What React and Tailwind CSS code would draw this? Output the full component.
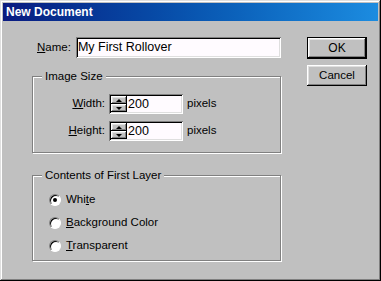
import React from "react";

const font = { fontFamily: '"Liberation Sans", Arial, sans-serif' };

function Raised({ children, className = "" }) {
  return (
    <div
      className={`flex items-center justify-center bg-[#c0c0c0] shadow-[inset_-1px_-1px_0_#000,inset_1px_1px_0_#fff,inset_-2px_-2px_0_#808080,inset_2px_2px_0_#dfdfdf] ${className}`}
    >
      {children}
    </div>
  );
}

function Spinner() {
  return (
    <div className="flex flex-col w-[16px] h-full">
      <Raised className="flex-1">
        <div className="w-0 h-0 border-l-[3px] border-r-[3px] border-b-[3px] border-l-transparent border-r-transparent border-b-black" />
      </Raised>
      <Raised className="flex-1">
        <div className="w-0 h-0 border-l-[3px] border-r-[3px] border-t-[3px] border-l-transparent border-r-transparent border-t-black" />
      </Raised>
    </div>
  );
}

function SpinField({ label, accel, rest }) {
  return (
    <div className="flex items-center h-[20px]">
      <div className="w-[72px] text-right text-[11.5px]">
        <span className="underline">{accel}</span>
        {rest}
      </div>
      <div className="ml-[4px] flex h-[20px] w-[74px] p-[2px] bg-[#fffbff] shadow-[inset_1px_1px_0_#808080,inset_-1px_-1px_0_#fff,inset_2px_2px_0_#000,inset_-2px_-2px_0_#dfdfdf]">
        <Spinner />
        <div className="pl-[1px] text-[12.5px] leading-[16px]">200</div>
      </div>
      <div className="ml-[4px] text-[11.5px]">pixels</div>
    </div>
  );
}

function Radio({ checked, children }) {
  return (
    <div className="flex items-center h-[14px]">
      <div className="w-[12px] h-[12px] rounded-full bg-white flex items-center justify-center border border-t-[#808080] border-l-[#808080] border-r-white border-b-white shadow-[inset_1px_1px_0_#000]">
        {checked && <div className="w-[4px] h-[4px] rounded-full bg-black" />}
      </div>
      <div className="ml-[5px] text-[11.5px]">{children}</div>
    </div>
  );
}

function Group({ title, className = "", children }) {
  return (
    <div
      className={`relative border border-[#808080] shadow-[inset_1px_1px_0_#fff,1px_1px_0_#fff] ${className}`}
    >
      <span className="absolute left-[9px] -top-[8px] px-[3px] bg-[#c0c0c0] text-[11.5px] leading-[14px]">
        {title}
      </span>
      {children}
    </div>
  );
}

export default function App() {
  return (
    <div
      style={font}
      className="w-[381px] h-[281px] bg-[#c0c0c0] text-black p-[3px] flex flex-col shadow-[inset_-1px_-1px_0_#000,inset_1px_1px_0_#dfdfdf,inset_-2px_-2px_0_#808080,inset_2px_2px_0_#fff]"
    >
      <div className="h-[18px] flex items-center pl-[3px] bg-gradient-to-r from-[#0a1a80] to-[#1c8ce0] text-white font-bold text-[12px]">
        New Document
      </div>

      <div className="flex pt-[16px]">
        <div className="ml-[29px] w-[249px] flex flex-col">
          <div className="flex items-center h-[21px]">
            <div className="ml-[5px] text-[11.5px]">
              <span className="underline">N</span>ame:
            </div>
            <div className="ml-[5px] w-[205px] h-[21px] px-[2px] bg-[#fffbff] text-[12.5px] leading-[21px] shadow-[inset_1px_1px_0_#808080,inset_-1px_-1px_0_#fff,inset_2px_2px_0_#000,inset_-2px_-2px_0_#dfdfdf]">
              My First Rollover
            </div>
          </div>

          <Group title="Image Size" className="mt-[18px] h-[77px] pt-[17px]">
            <div className="flex flex-col gap-[7px]">
              <SpinField accel="W" rest="idth:" />
              <SpinField accel="H" rest="eight:" />
            </div>
          </Group>

          <Group title="Contents of First Layer" className="mt-[22px] h-[86px] pt-[17px] pl-[16px]">
            <div className="flex flex-col gap-[9px]">
              <Radio checked>
                Whi<span className="underline">t</span>e
              </Radio>
              <Radio>
                <span className="underline">B</span>ackground Color
              </Radio>
              <Radio>
                <span className="underline">T</span>ransparent
              </Radio>
            </div>
          </Group>
        </div>

        <div className="ml-[26px] flex flex-col">
          <div className="w-[60px] h-[22px] border border-black">
            <Raised className="w-full h-full text-[12px]">OK</Raised>
          </div>
          <Raised className="mt-[6px] w-[60px] h-[21px] text-[11.5px]">Cancel</Raised>
        </div>
      </div>
    </div>
  );
}
